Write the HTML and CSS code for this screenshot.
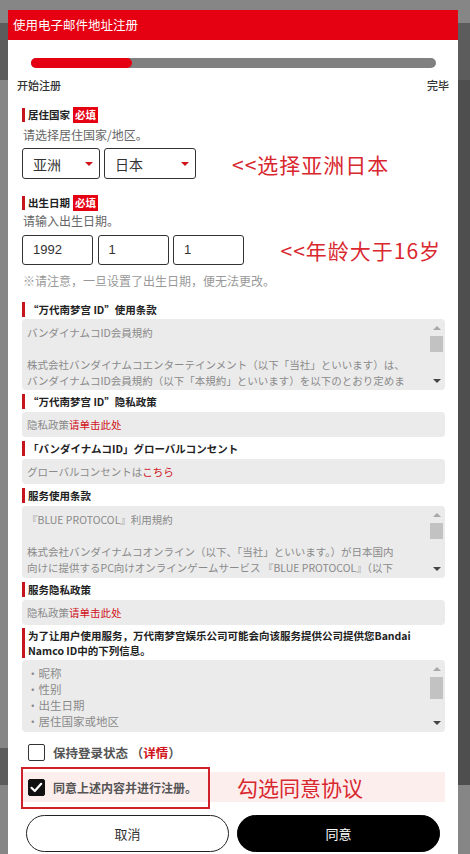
FILE: index.html
```html
<!DOCTYPE html>
<html lang="zh-CN">
<head>
  <meta charset="UTF-8">
  <meta name="viewport" content="width=device-width, initial-scale=1">
  <title>使用电子邮件地址注册</title>
  <link rel="stylesheet" href="styles.css">
</head>
<body>

  <div class="modal">
    <div class="modal-head">使用电子邮件地址注册</div>

    <div class="modal-body">
      <div class="progress"><div class="progress-fill"></div></div>
      <div class="steps"><span>开始注册</span><span>完毕</span></div>

      <!-- 居住国家 -->
      <div class="field-label first"><span>居住国家</span><span class="req">必填</span></div>
      <p class="hint">请选择居住国家/地区。</p>
      <div class="input-row">
        <div class="select region"><span>亚洲</span><i class="caret"></i></div>
        <div class="select country"><span>日本</span><i class="caret"></i></div>
        <span class="mark-text">&lt;&lt;选择亚洲日本</span>
      </div>

      <!-- 出生日期 -->
      <div class="field-label second"><span>出生日期</span><span class="req">必填</span></div>
      <p class="hint tight">请输入出生日期。</p>
      <div class="input-row dates">
        <div class="date-input">1992</div>
        <div class="date-input">1</div>
        <div class="date-input">1</div>
        <span class="mark-text">&lt;&lt;年龄大于16岁</span>
      </div>
      <p class="note">※请注意，一旦设置了出生日期，便无法更改。</p>

      <!-- 条款 -->
      <div class="sec-label">“万代南梦宫 ID”使用条款</div>
      <div class="scroll-box">
        <div class="scroll-text jp">
          <div>バンダイナムコID会員規約</div>
          <div>&nbsp;</div>
          <div>株式会社バンダイナムコエンターテインメント（以下「当社」といいます）は、</div>
          <div>バンダイナムコID会員規約（以下「本規約」といいます）を以下のとおり定めま</div>
        </div>
        <div class="scrollbar"><i class="arrow-up"></i><i class="thumb"></i><i class="arrow-down"></i></div>
      </div>

      <div class="sec-label">“万代南梦宫 ID”隐私政策</div>
      <div class="link-box">隐私政策<a href="#">请单击此处</a></div>

      <div class="sec-label">「バンダイナムコID」グローバルコンセント</div>
      <div class="link-box jp">グローバルコンセントは<a href="#">こちら</a></div>

      <div class="sec-label">服务使用条款</div>
      <div class="scroll-box tall">
        <div class="scroll-text jp">
          <div>『BLUE PROTOCOL』利用規約</div>
          <div>&nbsp;</div>
          <div>株式会社バンダイナムコオンライン（以下、「当社」といいます。）が日本国内</div>
          <div>向けに提供するPC向けオンラインゲームサービス 『BLUE PROTOCOL』（以下</div>
        </div>
        <div class="scrollbar"><i class="arrow-up"></i><i class="thumb"></i><i class="arrow-down"></i></div>
      </div>

      <div class="sec-label">服务隐私政策</div>
      <div class="link-box">隐私政策<a href="#">请单击此处</a></div>

      <div class="sec-label two-line">为了让用户使用服务，万代南梦宫娱乐公司可能会向该服务提供公司提供您Bandai Namco ID中的下列信息。</div>
      <div class="scroll-box tall info">
        <div class="scroll-text">
          <div>・昵称</div>
          <div>・性别</div>
          <div>・出生日期</div>
          <div>・居住国家或地区</div>
        </div>
        <div class="scrollbar"><i class="arrow-up"></i><i class="thumb big"></i><i class="arrow-down"></i></div>
      </div>

      <!-- 勾选 -->
      <label class="check-row">
        <span class="check"></span>
        <span>保持登录状态 （<em>详情</em>）</span>
      </label>
      <div class="check-row agree">
        <span class="check on">
          <svg width="17" height="17" viewBox="0 0 17 17"><path d="M3.5 8.8 L6.8 12 L13.2 4.8" fill="none" stroke="#fff" stroke-width="2.2" stroke-linecap="round" stroke-linejoin="round"/></svg>
        </span>
        <span>同意上述内容并进行注册。</span>
        <span class="mark-text agree-tip">勾选同意协议</span>
      </div>

      <div class="buttons">
        <button class="btn-cancel">取消</button>
        <button class="btn-ok">同意</button>
      </div>
    </div>
  </div>

</body>
</html>
```

FILE: styles.css
```css
html, body {
  height: 100%;
}
body {
  margin: 0;
  overflow: hidden;
  font-family: "Noto Sans CJK SC", "Noto Sans", sans-serif;
  color: #333;
  background:
    linear-gradient(#5c5c5c, #5c5c5c) 0 23px / 100% 57px no-repeat,
    linear-gradient(#4e4e4e, #4e4e4e) right 0 top 80px / 12px 705px no-repeat,
    linear-gradient(#5c5c5c, #5c5c5c) 0 748px / 8px 37px no-repeat,
    #868686;
}
.jp {
  font-family: "Noto Sans CJK JP", "Noto Sans", sans-serif;
}

.modal {
  width: 450px;
  margin: 10px 0 0 8px;
  background: #fff;
  height: 844px;
}
.modal-head {
  height: 30px;
  line-height: 30px;
  padding-left: 5px;
  background: #e50012;
  color: #fff;
  font-size: 12.5px;
}
.modal-body {
  padding: 0 13px 0 14px;
}

.progress {
  margin: 18px 9px 0;
  height: 10px;
  border-radius: 5px;
  background: #808080;
}
.progress-fill {
  width: 101px;
  height: 10px;
  border-radius: 5px;
  background: #e50012;
}
.steps {
  display: flex;
  justify-content: space-between;
  margin: 9px -4px 0 -5px;
  line-height: 16px;
  font-size: 11px;
  font-weight: 500;
  color: #333;
}

.field-label {
  display: flex;
  align-items: center;
  height: 16px;
  font-size: 10.5px;
  font-weight: bold;
  color: #222;
}
.field-label span:first-child {
  border-left: 3px solid #c4161c;
  padding-left: 3px;
  line-height: 14px;
}
.field-label.first {
  margin-top: 14px;
}
.field-label.second {
  margin-top: 16px;
}
.req {
  margin-left: 3px;
  padding: 0 2px;
  background: #e50012;
  color: #fff;
  line-height: 16px;
}
.hint {
  margin: 3px 0 0 1px;
  font-size: 12px;
  line-height: 17px;
  color: #666;
}
.hint.tight {
  margin-top: 1px;
}

.input-row {
  display: flex;
  align-items: center;
  margin-top: 5px;
}
.input-row.dates {
  margin-top: 6px;
}
.select {
  display: flex;
  align-items: center;
  box-sizing: border-box;
  height: 31px;
  margin-right: 4px;
  padding-left: 10px;
  border: 1px solid #333;
  border-radius: 3px;
  font-size: 14px;
  color: #333;
}
.select.region {
  width: 78px;
}
.select.country {
  width: 92px;
}
.caret {
  margin-left: auto;
  margin-right: 6px;
  border-left: 4px solid transparent;
  border-right: 4px solid transparent;
  border-top: 4px solid #d0121b;
}
.date-input {
  box-sizing: border-box;
  width: 71px;
  height: 30px;
  margin-right: 4.5px;
  padding-left: 10px;
  border: 1px solid #333;
  border-radius: 3px;
  line-height: 28px;
  font-family: "Liberation Sans", sans-serif;
  font-size: 13px;
  color: #333;
}
.mark-text {
  margin-left: 32px;
  font-size: 21px;
  color: #d9272e;
  letter-spacing: 1px;
}
.note {
  margin: 7px 0 0 1px;
  font-size: 12px;
  line-height: 17px;
  color: #999;
}

.sec-label {
  margin-top: 4px;
  border-left: 3px solid #c4161c;
  padding-left: 3px;
  line-height: 15px;
  font-size: 10.5px;
  font-weight: bold;
  color: #222;
}
.note + .sec-label {
  margin-top: 13px;
}
.sec-label.two-line {
  margin-top: 3px;
  padding-right: 20px;
}

.scroll-box {
  display: flex;
  height: 71px;
  margin-top: 2px;
  border-radius: 4px;
  background: #ebebeb;
  overflow: hidden;
}
.scroll-box.tall {
  height: 72px;
  margin-top: 3px;
}
.scroll-box.info {
  margin-top: 2px;
}
.scroll-text {
  flex: 1;
  padding: 6px 0 0 5px;
  overflow: hidden;
  font-size: 10.5px;
  line-height: 16px;
  color: #8a8a8a;
  white-space: nowrap;
}
.scroll-box.info .scroll-text {
  padding-top: 5px;
  font-size: 11.5px;
}
.scrollbar {
  display: flex;
  flex-direction: column;
  align-items: center;
  width: 13px;
  margin-right: 2px;
}
.arrow-up {
  margin-top: 7px;
  border-left: 4px solid transparent;
  border-right: 4px solid transparent;
  border-bottom: 4px solid #a8a8a8;
}
.thumb {
  width: 13px;
  height: 16px;
  margin-top: 6px;
  background: #c2c2c2;
}
.thumb.big {
  height: 22px;
}
.arrow-down {
  margin-top: auto;
  margin-bottom: 7px;
  border-left: 4px solid transparent;
  border-right: 4px solid transparent;
  border-top: 4px solid #444;
}

.link-box {
  display: flex;
  align-items: center;
  height: 25px;
  margin-top: 3px;
  padding-left: 5px;
  border-radius: 4px;
  background: #ebebeb;
  font-size: 10.5px;
  color: #8a8a8a;
}
.link-box a {
  color: #d0121b;
  text-decoration: none;
}

.check-row {
  display: flex;
  align-items: center;
  height: 20px;
  margin-top: 10px;
  padding-left: 6px;
  font-size: 12.5px;
  font-weight: bold;
  color: #555;
}
.check-row em {
  font-style: normal;
  color: #d0121b;
}
.check {
  box-sizing: border-box;
  width: 17px;
  height: 17px;
  margin-right: 8px;
  border: 1px solid #333;
  border-radius: 2px;
}
.check.on {
  border-color: #111;
  background: #111;
}
.check.on svg {
  display: block;
  margin: -1px;
}
.check-row.agree {
  position: relative;
  height: 30px;
  background: #fdeeee;
  font-size: 12px;
}
.check-row.agree::after {
  content: "";
  position: absolute;
  left: -1px;
  top: -5px;
  width: 185px;
  height: 38px;
  border: 2px solid #d0212a;
}
.agree-tip {
  margin-left: 40px;
  font-weight: normal;
  letter-spacing: 0;
}

.buttons {
  display: flex;
  gap: 8px;
  margin-top: 13px;
  padding: 0 5px 0 4px;
}
.buttons button {
  flex: 1;
  height: 37px;
  border-radius: 19px;
  font-family: "Noto Sans CJK SC", sans-serif;
  font-size: 13px;
  cursor: pointer;
}
.btn-cancel {
  background: #fff;
  border: 1px solid #222;
  color: #333;
}
.btn-ok {
  background: #000;
  border: 1px solid #000;
  color: #fff;
}
```
